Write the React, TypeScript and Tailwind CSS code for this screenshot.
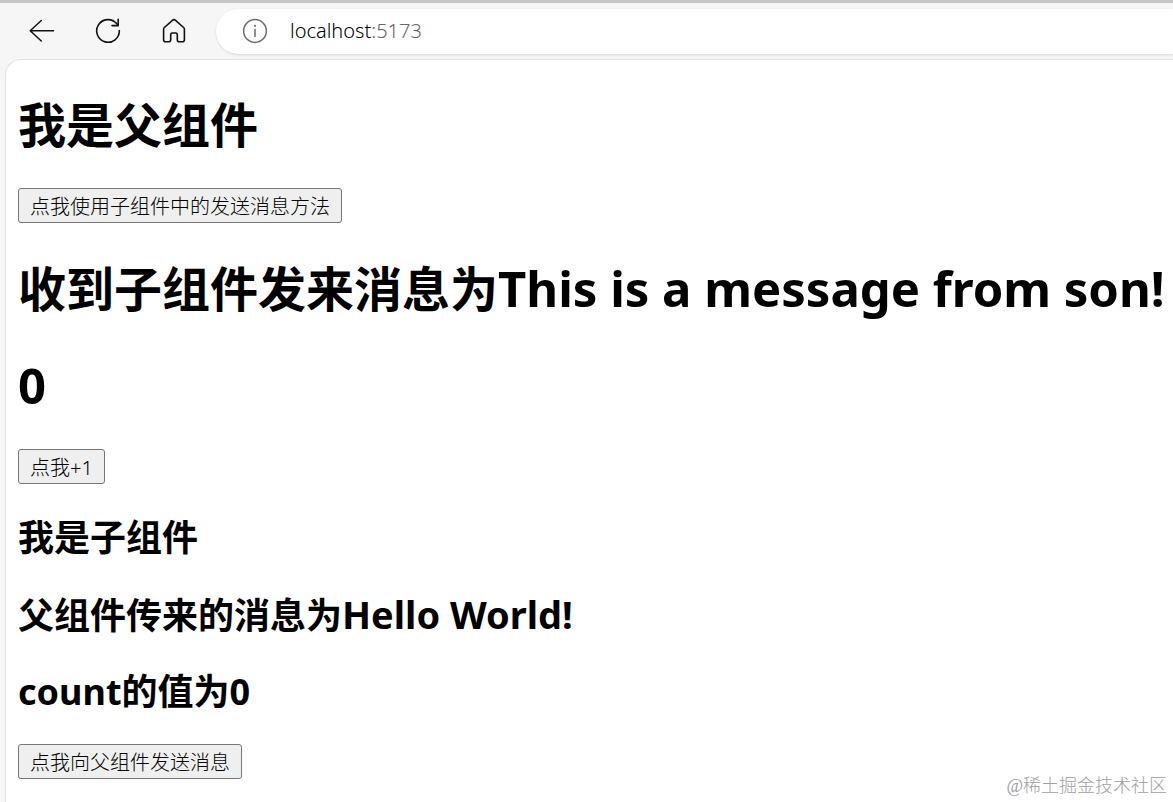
import React, { useState } from 'react';

const BackIcon = () => (
  <svg width="26" height="26" viewBox="0 0 26 26" fill="none" stroke="#111" strokeWidth="1.5" strokeLinecap="round" strokeLinejoin="round">
    <path d="M24.5 12.7H1.5M12.3 2.5L1.2 12.7L12.3 23" />
  </svg>
);

const ReloadIcon = () => (
  <svg width="26" height="26" viewBox="0 0 26 26" fill="none" stroke="#111" strokeWidth="1.6" strokeLinecap="round" strokeLinejoin="round">
    <path d="M24.3 12.5A11.3 11.3 0 1 1 21.6 5.6L23.2 7.4" />
    <path d="M23.2 1.4V7.6H17" />
  </svg>
);

const HomeIcon = () => (
  <svg width="26" height="26" viewBox="0 0 26 26" fill="none" stroke="#111" strokeWidth="1.6" strokeLinejoin="round">
    <path d="M11.7 2.2a2 2 0 0 1 2.6 0l8.3 7.3a2.4 2.4 0 0 1 .8 1.8v10.4a2 2 0 0 1-2 2h-3.1a2 2 0 0 1-2-2v-5.1a1.6 1.6 0 0 0-1.6-1.6h-3.4a1.6 1.6 0 0 0-1.6 1.6v5.1a2 2 0 0 1-2 2H4.6a2 2 0 0 1-2-2V11.3a2.4 2.4 0 0 1 .8-1.8z" />
  </svg>
);

const InfoIcon = () => (
  <svg width="26" height="26" viewBox="0 0 26 26" fill="none" stroke="#6b6b6b" strokeWidth="1.5" strokeLinecap="round">
    <circle cx="13" cy="13" r="11.4" />
    <path d="M13 11.5V18.5" />
    <circle cx="13" cy="7.8" r="1.1" fill="#6b6b6b" stroke="none" />
  </svg>
);

const navButtons = [
  { label: '返回', Icon: BackIcon },
  { label: '刷新', Icon: ReloadIcon },
  { label: '主页', Icon: HomeIcon },
];

const Toolbar: React.FC = () => (
  <header className="flex h-14 items-center border-t-3 border-[#c6c6c6] pt-[3px] pl-[29px]">
    <nav className="flex gap-10">
      {navButtons.map(({ label, Icon }) => (
        <button key={label} type="button" aria-label={label}>
          <Icon />
        </button>
      ))}
    </nav>
    <div className="ml-[29px] flex h-[45px] flex-1 items-center gap-[22px] rounded-l-full bg-white pl-[26px] shadow-sm">
      <InfoIcon />
      <p className="font-['Noto_Sans',sans-serif] text-xl font-light text-black">
        localhost<span className="text-[#666]">:5173</span>
      </p>
    </div>
  </header>
);

interface ActionButtonProps {
  onClick: () => void;
  children: React.ReactNode;
}

const ActionButton: React.FC<ActionButtonProps> = ({ onClick, children }) => (
  <div className="h-9">
    <button
      type="button"
      onClick={onClick}
      className="h-[35px] rounded-[3px] border border-[#767676] bg-[#efefef] px-[11px] pt-0.5 text-xl leading-8 font-light"
    >
      {children}
    </button>
  </div>
);

interface SonProps {
  message: string;
  count: number;
  onSend: () => void;
}

const Son: React.FC<SonProps> = ({ message, count, onSend }) => (
  <section className="pt-px">
    <h2 className="my-7 text-4xl leading-12 font-bold">我是子组件</h2>
    <h2 className="my-7 text-4xl leading-12 font-bold">
      父组件传来的消息为<span className="text-[38px]">{message}</span>
    </h2>
    <h2 className="my-7 text-4xl leading-12 font-bold">count的值为{count}</h2>
    <ActionButton onClick={onSend}>点我向父组件发送消息</ActionButton>
  </section>
);

const App: React.FC = () => {
  const [count, setCount] = useState(0);
  const [received, setReceived] = useState('This is a message from son!');

  const sendMessage = () => setReceived('This is a message from son!');

  return (
    <div className="flex min-h-screen flex-col bg-[#f6f6f6] text-black">
      <Toolbar />
      <main className="relative mt-[3px] ml-[5px] flex-1 rounded-tl-2xl border-t border-l border-[#e2e2e2] bg-white px-3 pt-px font-['Noto_Sans','Noto_Sans_CJK_SC',sans-serif]">
        <h1 className="mt-8 mb-[31px] text-5xl leading-16 font-bold">我是父组件</h1>
        <ActionButton onClick={sendMessage}>点我使用子组件中的发送消息方法</ActionButton>
        <h1 className="mt-8 text-5xl leading-16 font-bold whitespace-nowrap">
          收到子组件发来消息为<span className="text-[49px]">{received}</span>
        </h1>
        <h1 className="my-8 text-[49px] leading-16 font-bold">{count}</h1>
        <ActionButton onClick={() => setCount(count + 1)}>点我+1</ActionButton>
        <Son message="Hello World!" count={count} onSend={sendMessage} />
        <footer className="absolute right-1.5 bottom-0 font-['Liberation_Serif','Noto_Sans_CJK_SC',serif] text-lg leading-8 font-light text-[#a0a0a0]">
          @稀土掘金技术社区
        </footer>
      </main>
    </div>
  );
};

export default App;
